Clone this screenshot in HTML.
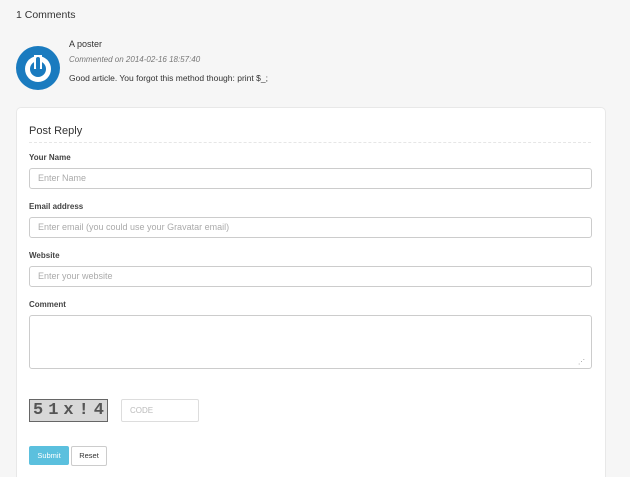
<!DOCTYPE html>
<html><head><style>
html,body{margin:0;width:630px;height:477px;overflow:hidden}
body{background:#f6f6f6;font-family:"Liberation Sans",sans-serif;color:#333;position:relative}
.a{position:absolute}
.in{position:absolute;left:29px;width:561px;height:19px;border:1px solid #ccc;border-radius:3px;background:#fff;font-size:9px;color:#aaa;line-height:19px;text-indent:8px;box-sizing:content-box}
.lb{position:absolute;left:29px;font-size:8px;font-weight:bold;color:#444}
</style></head><body>
<div class="a" style="left:16px;top:9px;font-size:10.5px;color:#333">1 Comments</div>
<svg class="a" style="left:16px;top:46px" width="44" height="44" viewBox="0 0 44 44">
<circle cx="22" cy="22" r="22" fill="#1a7bbf"/>
<circle cx="22" cy="23" r="13" fill="#fff"/>
<circle cx="22" cy="23" r="8" fill="#1a7bbf"/>
<rect x="18" y="9" width="8" height="14" fill="#fff"/>
<rect x="20" y="11" width="4" height="13" rx="2" fill="#1a7bbf"/>
</svg>
<div class="a" style="left:69px;top:39px;font-size:9px">A poster</div>
<div class="a" style="left:69px;top:55px;font-size:8px;font-style:italic;color:#777">Commented on 2014-02-16 18:57:40</div>
<div class="a" style="left:69px;top:73px;font-size:8.5px">Good article. You forgot this method though: print $_;</div>
<div class="a" style="left:16px;top:107px;width:588px;height:370px;background:#fff;border:1px solid #e8e8e8;border-bottom:none;border-radius:5px 5px 0 0"></div>
<div class="a" style="left:29px;top:125px;font-size:11px">Post Reply</div>
<div class="a" style="left:29px;top:142px;width:562px;border-top:1px dashed #e6e6e6"></div>
<div class="lb" style="top:153px">Your Name</div>
<div class="in" style="top:168px">Enter Name</div>
<div class="lb" style="top:202px">Email address</div>
<div class="in" style="top:217px">Enter email (you could use your Gravatar email)</div>
<div class="lb" style="top:251px">Website</div>
<div class="in" style="top:266px">Enter your website</div>
<div class="lb" style="top:300px">Comment</div>
<div class="in" style="top:315px;height:52px"></div>
<div class="a" style="left:578px;top:358px;font-size:7px;color:#999">⋰</div>
<div class="a" style="left:29px;top:399px;width:77px;height:21px;background:#d8d8d8;border:1px solid #666;font:bold 17px 'Liberation Mono',monospace;color:#555;letter-spacing:5px;line-height:21px;text-indent:3px">51x!4</div>
<div class="a" style="left:121px;top:399px;width:76px;height:21px;border:1px solid #ddd;border-radius:2px;font-size:8px;color:#bbb;line-height:21px;text-indent:8px">CODE</div>
<div class="a" style="left:29px;top:446px;width:40px;height:19px;background:#5bc0de;border-radius:2px;font-size:7.5px;color:#fff;text-align:center;line-height:19px">Submit</div>
<div class="a" style="left:71px;top:446px;width:34px;height:18px;border:1px solid #ccc;border-radius:2px;font-size:7.5px;color:#333;text-align:center;line-height:18px">Reset</div>
</body></html>
